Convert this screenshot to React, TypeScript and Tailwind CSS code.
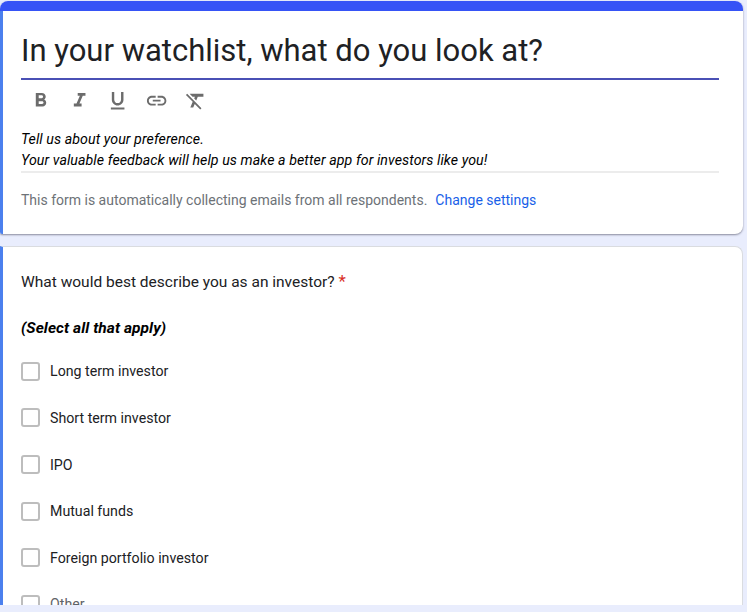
import {
  MdFormatBold,
  MdFormatItalic,
  MdFormatUnderlined,
  MdFormatClear,
  MdLink,
} from "react-icons/md";

const tools = [MdFormatBold, MdFormatItalic, MdFormatUnderlined, MdLink, MdFormatClear];

const options = [
  "Long term investor",
  "Short term investor",
  "IPO",
  "Mutual funds",
  "Foreign portfolio investor",
  "Other",
];

function HeaderCard() {
  return (
    <section className="flex h-[233px] w-[743px] shrink-0 flex-col overflow-hidden rounded-lg rounded-bl-[2px] bg-white shadow-[0_1px_2px_rgba(60,60,80,0.55)]">
      <div className="h-[10px] shrink-0 bg-[#3653f6]" />
      <div className="flex-1 border-l-[3px] border-[#4b80ee] pr-6 pl-[18px]">
        <h1 className="flex h-[67px] items-center pt-[13px] text-[31px] leading-[40px] whitespace-nowrap text-[#202124]">
          In your watchlist, what do you look at?
        </h1>
        <div className="h-[2px] bg-[#4a50b5]" />
        <div className="flex h-[42px] items-center">
          {tools.map((Icon, i) => (
            <div key={i} className="flex w-[38.8px] justify-center text-[#6c6c6c]">
              <Icon className="size-[23.3px]" />
            </div>
          ))}
        </div>
        <p className="h-[51px] border-b-2 border-[#ececec] pt-[7px] text-[14.2px] leading-[21.3px] tracking-[0.07px] whitespace-nowrap text-black italic">
          Tell us about your preference.
          <br />
          Your valuable feedback will help us make a better app for investors like you!
        </p>
        <p className="flex gap-[8px] pt-[17px] text-[14px] leading-5 whitespace-nowrap text-[#6d7277]">
          <span>This form is automatically collecting emails from all respondents.</span>
          <a className="text-[#1a5fe8]">Change settings</a>
        </p>
      </div>
    </section>
  );
}

function QuestionCard() {
  return (
    <section className="h-[359px] w-[743px] shrink-0 overflow-hidden rounded-tr-lg border-t border-r border-l-[3px] border-t-[#dadce0] border-r-[#dadce0] border-l-[#4b80ee] bg-white pl-[18px]">
      <div className="flex gap-1 pt-[25px] text-[15.5px] leading-5 whitespace-nowrap text-[#202124]">
        <span>What would best describe you as an investor?</span>
        <span className="-mt-px text-[17px] text-[#d93025]">*</span>
      </div>
      <p className="pt-[26px] text-[15.5px] leading-5 font-bold tracking-[0.07px] text-black italic">
        (Select all that apply)
      </p>
      <ul className="pt-[23.4px]">
        {options.map((label) => (
          <li key={label} className="flex h-[46.6px] items-start gap-[10px]">
            <span className="mt-[0.5px] size-[19px] shrink-0 rounded-[3px] border-2 border-[#bdbdbd]" />
            <span
              className={
                label === "Other"
                  ? "text-[14.2px] leading-5 text-[#5f6368]"
                  : "text-[14.2px] leading-5 text-[#202124]"
              }
            >
              {label}
            </span>
          </li>
        ))}
      </ul>
    </section>
  );
}

export default function App() {
  return (
    <main className="flex h-[612px] w-[747px] flex-col gap-[12px] overflow-hidden bg-[#e9edfd] pt-[1px] font-['Roboto',sans-serif]">
      <HeaderCard />
      <QuestionCard />
    </main>
  );
}
